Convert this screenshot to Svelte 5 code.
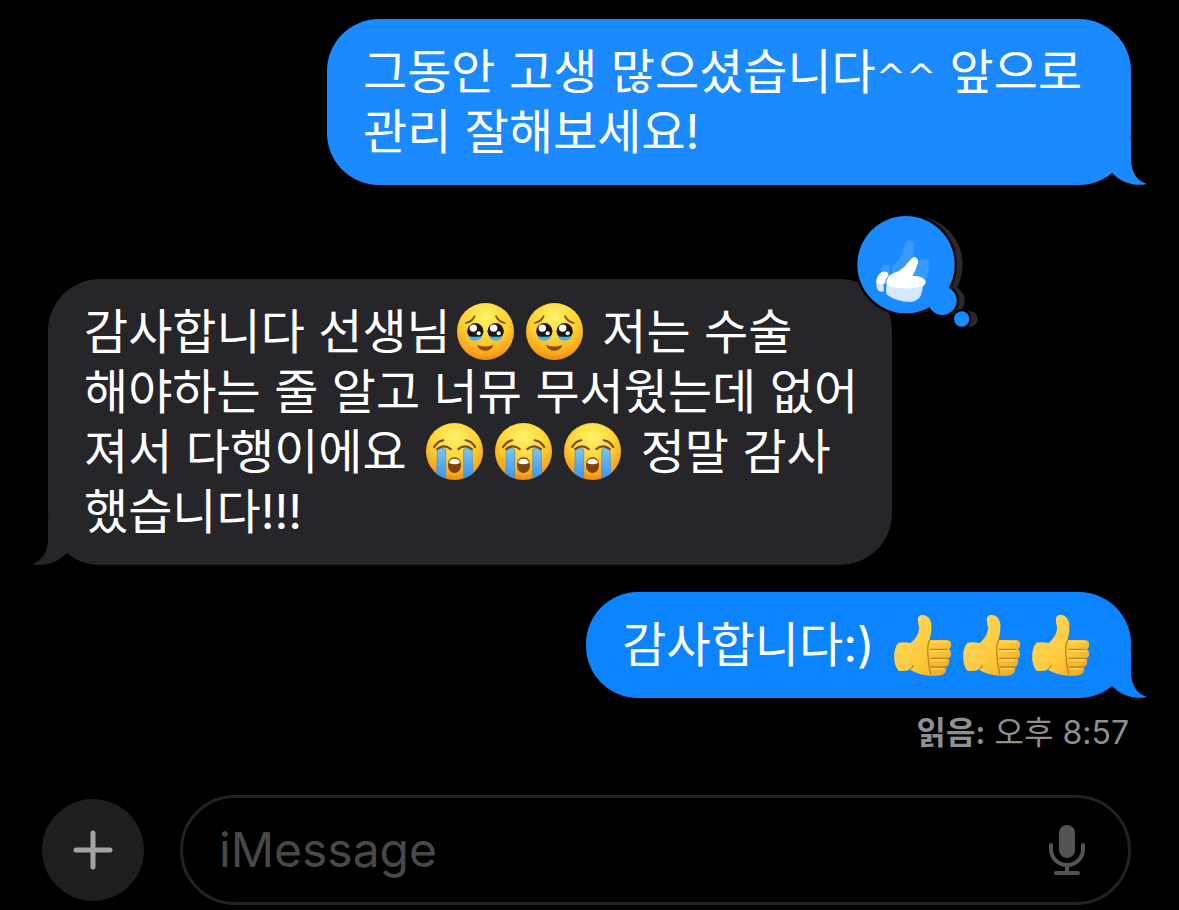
<script>
  // each message is a list of lines, each line a list of text and emoji parts
  let messages = [
    {
      from: 'me',
      size: 'long',
      lines: [['그동안 고생 많으셨습니다', { wide: '^^' }, ' 앞으로'], ['관리 잘해보세요!']]
    },
    {
      from: 'them',
      size: 'long',
      reaction: true,
      lines: [
        ['감사합니다 선생님', { emoji: 'touched' }, { emoji: 'touched' }, ' 저는 수술'],
        ['해야하는 줄 알고 너뮤 무서웠는데 없어'],
        ['져서 다행이에요 ', { emoji: 'sob' }, { emoji: 'sob' }, { emoji: 'sob' }, ' 정말 감사'],
        ['했습니다!!!']
      ]
    },
    {
      from: 'me',
      size: 'short',
      lines: [['감사합니다:) ', { emoji: 'thumb' }, { emoji: 'thumb' }, { emoji: 'thumb' }]]
    }
  ];

  let draft = '';
</script>

<svg class="defs" width="0" height="0" aria-hidden="true">
  <defs>
    <radialGradient id="face" cx="0.5" cy="0.25" r="0.75">
      <stop offset="0" stop-color="#fff36b" />
      <stop offset="0.5" stop-color="#fdd535" />
      <stop offset="0.85" stop-color="#f9a71f" />
      <stop offset="1" stop-color="#f08a10" />
    </radialGradient>
    <linearGradient id="tear" x1="0" y1="0" x2="0" y2="1">
      <stop offset="0" stop-color="#7cc4f5" />
      <stop offset="1" stop-color="#3292ee" />
    </linearGradient>
    <linearGradient id="skin" x1="0" y1="0" x2="1" y2="1">
      <stop offset="0" stop-color="#ffdc5e" />
      <stop offset="0.6" stop-color="#fdc93f" />
      <stop offset="1" stop-color="#eda31f" />
    </linearGradient>
    <clipPath id="faceClip"><circle cx="129" cy="125" r="84" /></clipPath>
  </defs>
</svg>

<main class="chat">
  <section class="messages" aria-label="대화">
    {#each messages as message}
      <div class="bubble {message.from} {message.size}">
        {#each message.lines as line}
          <p class="line">
            {#each line as part}
              {#if part.emoji === 'touched'}
                <svg class="emoji" viewBox="48 41 168 168" role="img" aria-label="🥹">
                  <circle cx="132" cy="125" r="84" fill="url(#face)" />
                  <path d="M74 100q17-3 26-20M163 80q9 17 26 20" fill="none" stroke="#8a4b08" stroke-width="5" stroke-linecap="round" />
                  <circle cx="102" cy="124" r="24" fill="#23160f" />
                  <circle cx="162" cy="124" r="24" fill="#23160f" />
                  <path d="M82 138q20 5 40 0q-4 13-20 14q-16-1-20-14zM142 138q20 5 40 0q-4 13-20 14q-16-1-20-14z" fill="#3eb4ee" />
                  <circle cx="96" cy="115" r="11" fill="#fff" />
                  <circle cx="156" cy="115" r="11" fill="#fff" />
                  <circle cx="112" cy="130" r="6" fill="#fff" />
                  <circle cx="171" cy="130" r="6" fill="#fff" />
                  <path d="M107 165q25 9 49 0q-8 17-25 17q-17 0-24-17z" fill="#8a4b08" />
                </svg>
              {:else if part.emoji === 'sob'}
                <svg class="emoji" viewBox="45 41 168 168" role="img" aria-label="😭">
                  <circle cx="129" cy="125" r="84" fill="url(#face)" />
                  <g clip-path="url(#faceClip)">
                    <path d="M78 118q12-4 25 0v92H76zM156 118q12-4 25 0l2 92h-27z" fill="url(#tear)" stroke="#4c8fc4" stroke-width="2" />
                  </g>
                  <path d="M69 112q10-17 27-20M162 92q18 3 28 20M78 118q20-16 40 0M140 118q20-16 40 0" fill="none" stroke="#7d4308" stroke-width="6" stroke-linecap="round" />
                  <path d="M129 142c12 0 19 9 19 23s-7 23-19 23s-19-9-19-23s7-23 19-23z" fill="#7d4308" />
                  <path d="M113 159c1-9 7-13 16-13s15 4 16 13q-16 7-32 0z" fill="#fff" />
                </svg>
              {:else if part.emoji === 'thumb'}
                <svg class="emoji hand" viewBox="38 40 174 189" role="img" aria-label="👍">
                  <path d="M53 126q18-3 36 1q23-17 26-44q-3-12-4-26q0-14 14-15q20 1 26 24q3 22-5 52h52q13 1 13 14q0 10-7 13q7 5 7 14q0 11-9 14q4 4 3 12q-1 11-9 13q2 18-11 24q-14 5-38 3q-36-3-59-18q-18 6-35 3q-13-15-13-42t13-42z" fill="url(#skin)" />
                  <path d="M146 119q-7 14-5 42q1 30 9 61M148 146h50M150 173h50M151 199h44M86 206q8-3 11-11" fill="none" stroke="#c98212" stroke-width="4" stroke-linecap="round" />
                  <path d="M151 124h48M153 151h46M154 178h40M154 204h34" fill="none" stroke="#ffdb62" stroke-width="4" stroke-linecap="round" />
                </svg>
              {:else if part.wide}<span class="wide">{part.wide}</span>
              {:else}{part}{/if}
            {/each}
          </p>
        {/each}

        <svg class="tail" viewBox="0 0 48 46" aria-hidden="true">
          <path d="M8 0H31V20C31 33 37 42 47 45C34 48 21 43 12 34Z" />
        </svg>

        {#if message.reaction}
          <svg class="reaction" viewBox="42 39 378 354" role="img" aria-label="좋아요">
            <g fill="#2a2a2d">
              <circle cx="222" cy="194" r="146" />
              <circle cx="331" cy="302" r="43" />
              <circle cx="390" cy="357" r="23" />
            </g>
            <g fill="#000">
              <circle cx="198" cy="194" r="153" />
              <circle cx="307" cy="302" r="50" />
              <circle cx="365" cy="357" r="30" />
            </g>
            <g fill="#1a8aff">
              <circle cx="198" cy="194" r="146" />
              <circle cx="307" cy="302" r="43" />
              <circle cx="365" cy="357" r="23" />
            </g>
            <path d="M126 200q10-8 22-4l2 22h-26zM154 200q30-18 40-66q4-14 15-14q14 3 13 20q-1 20-6 39h51q-1 30-5 56H160z" fill="#3a99ff" />
            <path d="M141 250q-6 24 0 34q26 20 72 22q20-3 29-18q6-18 8-36zM110 240q-4 22 6 32q8 5 16 2q-3-20 0-34z" fill="#d6e8ff" />
            <path d="M139 254q-1-26 20-34q22-6 36-22q10-12 19-22q8-8 15-3q8 6 4 18q-5 20-16 36q24 0 36 10q9 10-2 20q-20 8-58 8q-30-1-54-11zM118 222q8-10 22-6q8 4 5 12q-10 10-9 22q-14 5-27-2q0-16 9-26z" fill="#fff" />
          </svg>
        {/if}
      </div>
    {/each}
    <p class="receipt"><strong>읽음:</strong> 오후 8:57</p>
  </section>

  <form class="composer" on:submit|preventDefault>
    <button class="add" type="button" aria-label="추가">
      <svg viewBox="0 0 40 40" aria-hidden="true"><path d="M20 3V37M3 20H37" /></svg>
    </button>
    <div class="field">
      <input type="text" placeholder="iMessage" aria-label="iMessage" bind:value={draft} />
      <button class="mic" type="button" aria-label="받아쓰기">
        <svg viewBox="0 0 36 52" aria-hidden="true">
          <rect x="10" y="1" width="16" height="33" rx="8" />
          <path d="M2 21V25C2 34 9 41 18 41S34 34 34 25V21M18 41V49M7 49H29" />
        </svg>
      </button>
    </div>
  </form>
</main>

<style>
  :global(body) {
    background: #000;
  }
  .defs {
    position: absolute;
  }
  .chat {
    padding: 19px 48px 6px;
    color: #fff;
    font-family: Inter, "Noto Sans CJK KR", sans-serif;
  }
  .messages {
    display: flex;
    flex-direction: column;
  }
  .bubble {
    position: relative;
    box-sizing: border-box;
    max-width: 100%;
    padding: 23px 36px;
    border-radius: 52px;
    font-size: 48px;
    line-height: 60px;
  }
  .line {
    margin: 0;
  }
  .wide {
    font-family: "DejaVu Sans", sans-serif;
    font-size: 36px;
    line-height: 36px;
  }
  .me {
    align-self: flex-end;
    background: #0c84ff;
    fill: #0c84ff;
  }
  .me.long {
    width: 804px;
    background: #1b8aff;
    fill: #1b8aff;
  }
  .them {
    align-self: flex-start;
    width: 844px;
    margin: 94px 0 27px;
    padding-right: 24px;
    background: #26262a;
    fill: #26262a;
  }
  .tail {
    position: absolute;
    right: -17px;
    bottom: 0;
    width: 48px;
    height: 46px;
  }
  .them .tail {
    right: auto;
    left: -17px;
    transform: scaleX(-1);
  }
  .reaction {
    position: absolute;
    top: -66px;
    right: -88px;
    width: 126px;
    height: 118px;
  }
  .emoji {
    width: 57px;
    height: 57px;
    margin: -10px 6px;
    vertical-align: -1px;
  }
  .emoji.hand {
    width: 59px;
    height: 63px;
    margin: -10px 5px;
    vertical-align: -5px;
  }
  .receipt {
    margin: 12px 0 0;
    padding-right: 2px;
    color: #8e8e93;
    font-size: 32px;
    line-height: 46px;
    text-align: right;
  }
  .receipt strong {
    font-weight: 600;
  }
  .composer {
    display: flex;
    align-items: center;
    gap: 36px;
    margin: 39px 0 0 -6px;
  }
  .add {
    display: flex;
    flex: none;
    align-items: center;
    justify-content: center;
    width: 102px;
    height: 102px;
    padding: 0;
    border: none;
    border-radius: 50%;
    background: #1e1e20;
    cursor: pointer;
  }
  .add svg {
    width: 40px;
    height: 40px;
    fill: none;
    stroke: #a3a3a6;
    stroke-width: 5;
    stroke-linecap: round;
  }
  .field {
    display: flex;
    flex: 1;
    align-items: center;
    box-sizing: border-box;
    height: 110px;
    min-width: 0;
    padding: 0 43px 0 36px;
    border: 3px solid #222224;
    border-radius: 55px;
  }
  input {
    flex: 1;
    min-width: 0;
    padding: 0;
    border: none;
    outline: none;
    background: none;
    color: #fff;
    font: 48px/60px Inter, "Noto Sans CJK KR", sans-serif;
  }
  input::placeholder {
    color: #48484a;
    opacity: 1;
  }
  .mic {
    padding: 0;
    border: none;
    background: none;
    cursor: pointer;
  }
  .mic svg {
    display: block;
    width: 36px;
    height: 52px;
    fill: #545456;
  }
  .mic path {
    fill: none;
    stroke: #545456;
    stroke-width: 4;
    stroke-linecap: round;
  }
</style>
